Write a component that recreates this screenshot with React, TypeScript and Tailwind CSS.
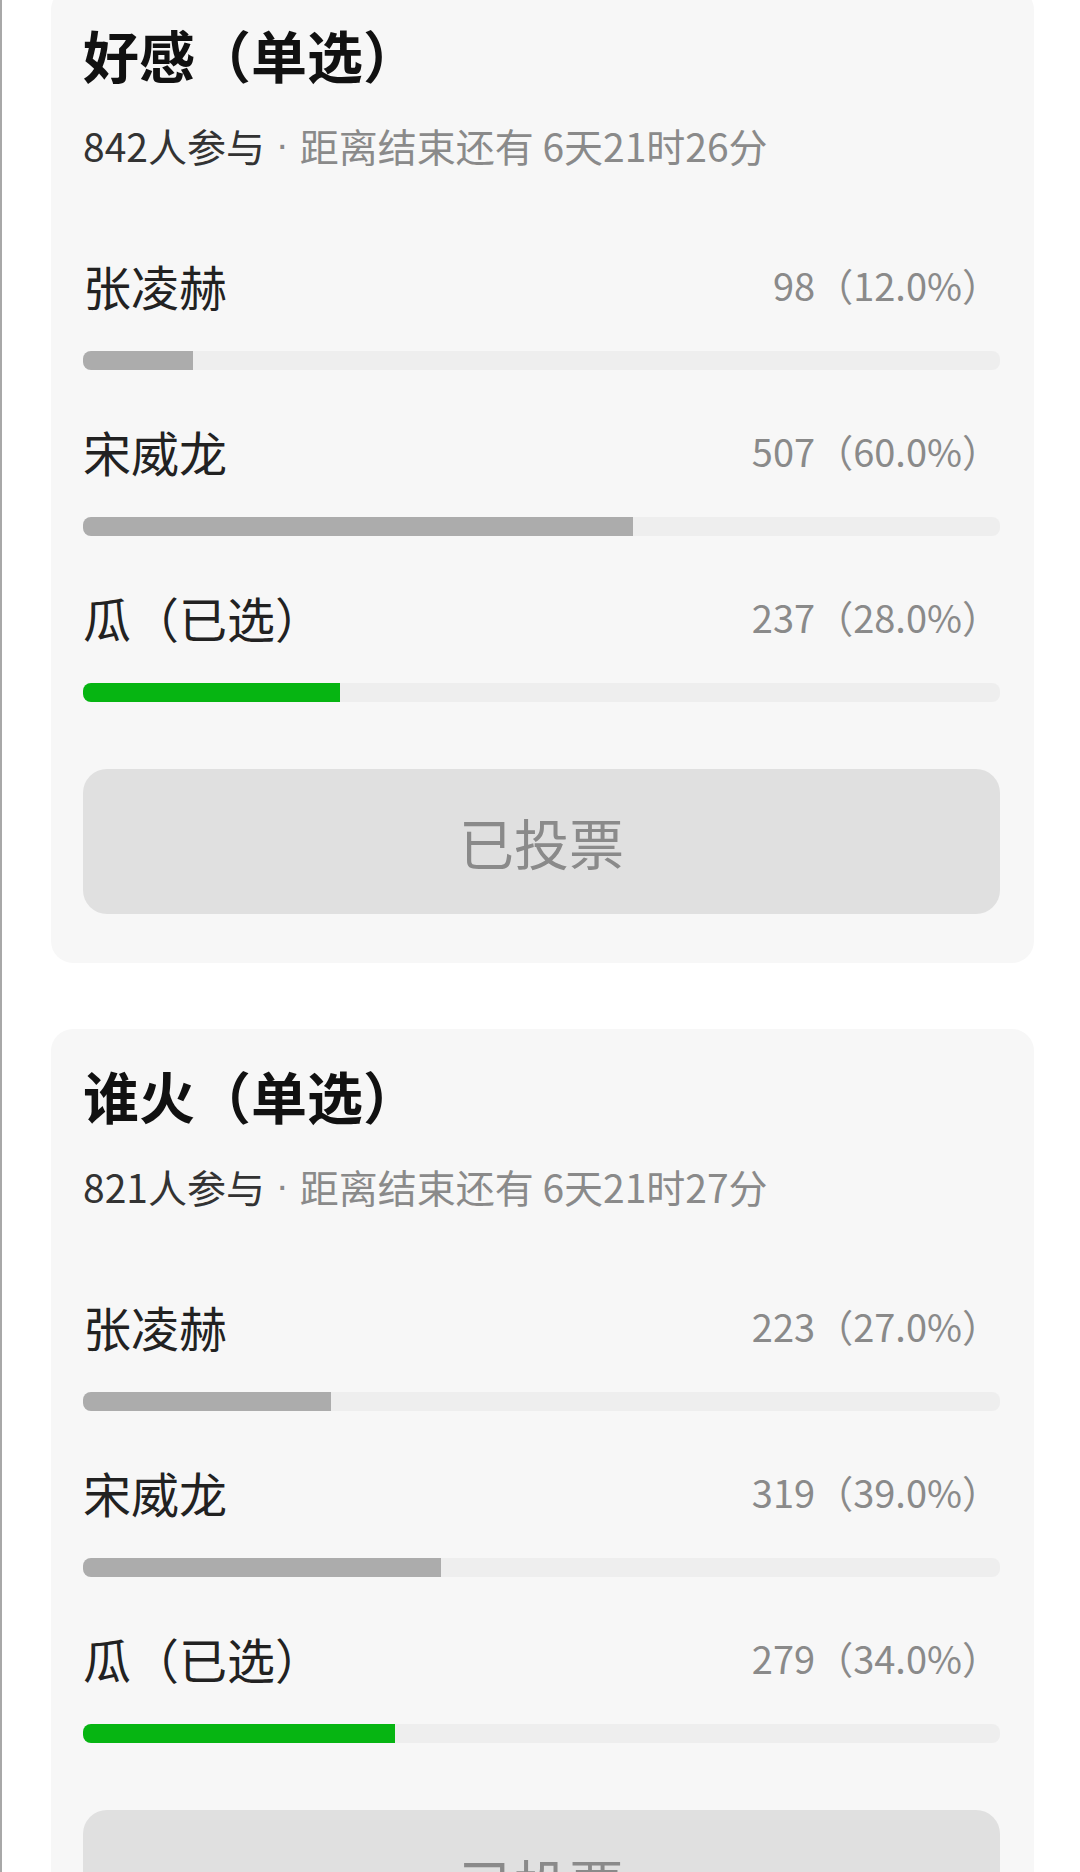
type Option = {
  name: string;
  votes: number;
  pct: number;
  chosen?: boolean;
};

type Poll = {
  title: string;
  people: number;
  remain: string;
  options: Option[];
};

const polls: Poll[] = [
  {
    title: "好感（单选）",
    people: 842,
    remain: "6天21时26分",
    options: [
      { name: "张凌赫", votes: 98, pct: 12 },
      { name: "宋威龙", votes: 507, pct: 60 },
      { name: "瓜（已选）", votes: 237, pct: 28, chosen: true },
    ],
  },
  {
    title: "谁火（单选）",
    people: 821,
    remain: "6天21时27分",
    options: [
      { name: "张凌赫", votes: 223, pct: 27 },
      { name: "宋威龙", votes: 319, pct: 39 },
      { name: "瓜（已选）", votes: 279, pct: 34, chosen: true },
    ],
  },
];

function PollCard({ poll, first }: { poll: Poll; first?: boolean }) {
  return (
    <div
      className={`w-[983px] rounded-[22px] bg-[#f7f7f7] pl-[32px] pr-[34px] pt-[26px] pb-[49px] ${
        first ? "-mt-[12px]" : ""
      }`}
    >
      <div className="text-[56px] leading-[80px] font-bold text-[#111111]">
        {poll.title}
      </div>
      <div className="mt-[26px] flex h-[50px] items-center text-[39px] leading-[50px] whitespace-nowrap">
        <span className="text-[#333333]">{poll.people}人参与</span>
        <span className="whitespace-pre font-['Liberation_Sans',sans-serif] leading-[50px] text-[#8a8a8a]">
          {" · "}
        </span>
        <span className="text-[#8a8a8a]">距离结束还有 {poll.remain}</span>
      </div>

      <div className="mt-[85px] flex flex-col gap-[51px]">
        {poll.options.map((o) => (
          <div key={o.name}>
            <div className="flex h-[60px] items-center justify-between">
              <span className="text-[48px] leading-[60px] text-[#222222]">
                {o.name}
              </span>
              <span className="text-[38px] leading-[60px] text-[#8a8a8a]">
                {o.votes}（{o.pct.toFixed(1)}%）
              </span>
            </div>
            <div className="mt-[36px] h-[19px] overflow-hidden rounded-[8px] bg-[#eeeeee]">
              <div
                className={`h-full ${o.chosen ? "bg-[#06b512]" : "bg-[#acacac]"}`}
                style={{ width: `${o.pct}%` }}
              />
            </div>
          </div>
        ))}
      </div>

      <div className="mt-[67px] flex h-[145px] items-center justify-center rounded-[24px] bg-[#e0e0e0] text-[55px] text-[#8a8a8a]">
        已投票
      </div>
    </div>
  );
}

export default function App() {
  return (
    <div className="h-[1872px] overflow-hidden border-l-2 border-[#a8a8a8] bg-white pl-[49px] font-['Noto_Sans_CJK_SC','Noto_Sans',sans-serif]">
      <div className="flex flex-col gap-[66px]">
        {polls.map((p, i) => (
          <PollCard key={p.title} poll={p} first={i === 0} />
        ))}
      </div>
    </div>
  );
}
